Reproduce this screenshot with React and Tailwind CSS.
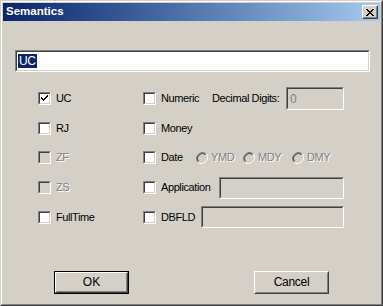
import React from "react";

const font = { fontFamily: '"Liberation Sans", Arial, sans-serif' };

const Raised = ({ className = "", children }) => (
  <div className={`border border-t-white border-l-white border-r-[#404040] border-b-[#404040] ${className}`}>
    <div className="w-full h-full border border-t-[#d4d0c8] border-l-[#d4d0c8] border-r-[#808080] border-b-[#808080] flex items-center justify-center">
      {children}
    </div>
  </div>
);

const Sunken = ({ className = "", inner = "bg-white", children }) => (
  <div className={`border border-t-[#808080] border-l-[#808080] border-r-white border-b-white ${className}`}>
    <div className={`w-full h-full border border-t-[#404040] border-l-[#404040] border-r-[#d4d0c8] border-b-[#d4d0c8] ${inner}`}>
      {children}
    </div>
  </div>
);

const Check = ({ checked, disabled }) => (
  <Sunken className="w-[13px] h-[13px] shrink-0" inner={disabled ? "bg-[#d4d0c8]" : "bg-white"}>
    {checked && (
      <svg width="9" height="9" viewBox="0 0 9 9" className="block">
        <path d="M1 3h1v1h1v1h1V4h1V3h1V2h1V1h1v2H7v1H6v1H5v1H4v1H3V6H2V5H1z" fill="#000" />
      </svg>
    )}
  </Sunken>
);

const Label = ({ disabled, className = "", children }) => (
  <span
    className={`text-[11px] tracking-[-0.4px] leading-none whitespace-nowrap ${disabled ? "text-[#808080] [text-shadow:1px_1px_0_#fff]" : "text-black"} ${className}`}
  >
    {children}
  </span>
);

const Radio = () => (
  <svg width="12" height="12" viewBox="0 0 12 12" className="block shrink-0">
    <path d="M10.2 1.8A6 6 0 0 0 1.8 10.2" fill="none" stroke="#808080" strokeWidth="1" />
    <path d="M9.5 2.5A5 5 0 0 0 2.5 9.5" fill="none" stroke="#404040" strokeWidth="1" />
    <path d="M1.8 10.2A6 6 0 0 0 10.2 1.8" fill="none" stroke="#ffffff" strokeWidth="1" />
  </svg>
);

const RadioItem = ({ label, w }) => (
  <div className={`flex items-center gap-[3px] ${w}`}>
    <Radio />
    <Label disabled>{label}</Label>
  </div>
);

const rows = [
  { a: "UC", checked: true, b: "Numeric", bw: "w-[51px]", extra: "digits" },
  { a: "RJ", b: "Money", bw: "" },
  { a: "ZF", disabledA: true, b: "Date", bw: "w-[35px]", extra: "date" },
  { a: "ZS", disabledA: true, b: "Application", bw: "w-[58px]", extra: "app" },
  { a: "FullTime", b: "DBFLD", bw: "w-[40px]", extra: "dbfld" },
];

export default function App() {
  return (
    <div style={font} className="w-[383px] h-[306px] bg-[#d4d0c8] select-none">
      <div className="w-full h-full border border-t-[#d4d0c8] border-l-[#d4d0c8] border-r-[#404040] border-b-[#404040]">
        <div className="w-full h-full border border-t-white border-l-white border-r-[#808080] border-b-[#808080] p-px flex flex-col">
          {/* title bar */}
          <div className="h-[18px] flex items-center justify-between bg-gradient-to-r from-[#0a246a] to-[#a6caf0] pl-[3px] pr-[2px]">
            <span className="text-white font-bold text-[11.5px] leading-none">Semantics</span>
            <Raised className="w-[16px] h-[14px] bg-[#d4d0c8]">
              <svg width="8" height="7" viewBox="0 0 8 7" className="block">
                <path d="M0 0h2v1h1v1h2V1h1V0h2v1H7v1H6v1H5v1h1v1h1v1h1v1H6V6H5V5H3v1H2v1H0V6h1V5h1V4h1V3H2V2H1V1H0z" fill="#000" />
              </svg>
            </Raised>
          </div>

          {/* name field */}
          <Sunken className="mt-[29px] ml-[12px] w-[355px] h-[22px]">
            <div className="h-full flex items-center pl-px">
              <span className="bg-[#0a246a] text-white text-[12px] tracking-[-0.3px] leading-[14px] px-[1px]">UC</span>
            </div>
          </Sunken>

          {/* options */}
          <div className="mt-[12px] flex flex-col">
            {rows.map((r) => (
              <div key={r.a} className="h-[29.6px] flex items-center">
                <div className="w-[140px] pl-[35px] flex items-center gap-[5px]">
                  <Check checked={r.checked} disabled={r.disabledA} />
                  <Label disabled={r.disabledA}>{r.a}</Label>
                </div>
                <div className="flex items-center gap-[5px]">
                  <Check />
                  <Label className={r.bw}>{r.b}</Label>
                </div>
                {r.extra === "digits" && (
                  <div className="flex items-center">
                    <Label className="w-[74px]">Decimal Digits:</Label>
                    <Sunken className="w-[58px] h-[23px]" inner="bg-[#d4d0c8]">
                      <div className="h-full flex items-center pl-[2px]">
                        <span className="text-[12px] leading-none text-[#808080]">0</span>
                      </div>
                    </Sunken>
                  </div>
                )}
                {r.extra === "date" && (
                  <div className="flex items-center">
                    <RadioItem label="YMD" w="w-[47px]" />
                    <RadioItem label="MDY" w="w-[49px]" />
                    <RadioItem label="DMY" w="" />
                  </div>
                )}
                {r.extra === "app" && <Sunken className="w-[125px] h-[22px]" inner="bg-[#d4d0c8]" />}
                {r.extra === "dbfld" && <Sunken className="w-[143px] h-[22px]" inner="bg-[#d4d0c8]" />}
              </div>
            ))}
          </div>

          {/* buttons */}
          <div className="mt-[39px] flex pl-[51px] gap-[125px]">
            <div className="border border-black">
              <Raised className="w-[73px] h-[21px] bg-[#d4d0c8]">
                <span className="text-[12px] leading-none">OK</span>
              </Raised>
            </div>
            <Raised className="w-[75px] h-[23px] bg-[#d4d0c8]">
              <span className="text-[12px] tracking-[-0.3px] leading-none">Cancel</span>
            </Raised>
          </div>
        </div>
      </div>
    </div>
  );
}
